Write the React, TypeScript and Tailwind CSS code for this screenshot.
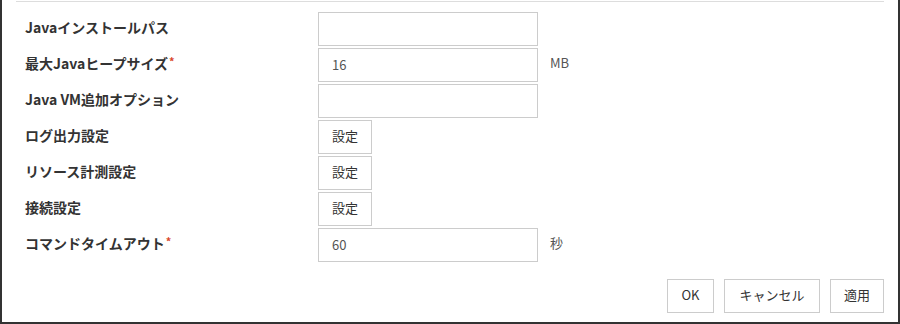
import React from "react";

interface Row {
  label: string;
  required?: boolean;
  kind: "input" | "button";
  value?: string;
  unit?: string;
}

const rows: Row[] = [
  { label: "Javaインストールパス", kind: "input", value: "" },
  { label: "最大Javaヒープサイズ", required: true, kind: "input", value: "16", unit: "MB" },
  { label: "Java VM追加オプション", kind: "input", value: "" },
  { label: "ログ出力設定", kind: "button" },
  { label: "リソース計測設定", kind: "button" },
  { label: "接続設定", kind: "button" },
  { label: "コマンドタイムアウト", required: true, kind: "input", value: "60", unit: "秒" },
];

const font = { fontFamily: '"Noto Sans CJK JP", "Noto Sans", sans-serif' };

const App: React.FC = () => {
  return (
    <div
      className="w-[900px] h-[324px] bg-white border-l-2 border-r-2 border-b-2 border-[#333] box-border px-[14px] pt-px text-[13px] text-[#333]"
      style={font}
    >
      {/* top separator */}
      <div className="border-t border-[#ddd]" />

      <div className="mt-[10px] flex flex-col gap-[2px]">
        {rows.map((row) => (
          <div key={row.label} className="flex items-center h-[34px]">
            <div className="w-[302px] pl-[9px] text-[14px] font-bold leading-none whitespace-nowrap relative -top-[2px]">
              {row.label}
              {row.required && (
                <span className="text-[#d9472b] text-[11px] align-top ml-px">*</span>
              )}
            </div>
            {row.kind === "input" ? (
              <>
                <input
                  type="text"
                  defaultValue={row.value}
                  className="w-[220px] h-[34px] border border-[#ccc] px-[13px] pb-[2px] text-[13px] text-[#555] outline-none bg-white"
                  style={font}
                />
                {row.unit && <span className="ml-[12px] text-[#555] relative -top-[2px]">{row.unit}</span>}
              </>
            ) : (
              <button
                className="w-[54px] h-[34px] border border-[#ccc] bg-white text-[13px] text-[#333] pb-[2px]"
                style={font}
              >
                設定
              </button>
            )}
          </div>
        ))}
      </div>

      {/* footer buttons */}
      <div className="mt-[17px] flex justify-end gap-[10px]">
        <button className="w-[47px] h-[34px] border border-[#ccc] bg-white text-[13px] pb-[2px]" style={font}>
          OK
        </button>
        <button className="w-[96px] h-[34px] border border-[#ccc] bg-white text-[13px] pb-[2px]" style={font}>
          キャンセル
        </button>
        <button className="w-[54px] h-[34px] border border-[#ccc] bg-white text-[13px] pb-[2px]" style={font}>
          適用
        </button>
      </div>
    </div>
  );
};

export default App;
